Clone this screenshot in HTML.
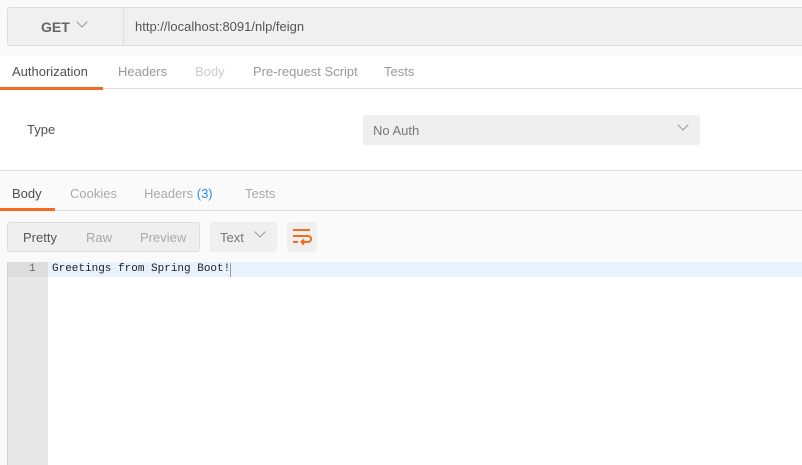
<!DOCTYPE html>
<html><head><style>
*{margin:0;padding:0;box-sizing:border-box}
body{width:802px;height:465px;overflow:hidden;background:#fafafa;font-family:"Liberation Sans",sans-serif;font-size:13px;color:#505050;position:relative}
.a{position:absolute}
.chev{position:absolute;width:8px;height:8px;border-right:1px solid #999;border-bottom:1px solid #999;transform:rotate(45deg)}
</style></head><body>
<div class="a" style="left:0;top:0;width:802px;height:56px;background:#fafafa"></div>
<div class="a" style="left:7px;top:7px;width:800px;height:39px;background:#f0f0f0;border:1px solid #ddd;border-radius:3px"></div>
<div class="a" style="left:123px;top:8px;width:1px;height:37px;background:#ddd"></div>
<div class="a" style="left:41px;top:19px;font-size:14px;color:#666;font-weight:bold">GET</div>
<div class="chev" style="left:78px;top:18px"></div>
<div class="a" style="left:135px;top:19px;color:#555">http://localhost:8091/nlp/feign</div>
<div class="a" style="left:0;top:56px;width:802px;height:114px;background:#fff"></div>
<div class="a" style="left:12px;top:64px;color:#505050">Authorization</div>
<div class="a" style="left:118px;top:64px;color:#999">Headers</div>
<div class="a" style="left:195px;top:64px;color:#ccc">Body</div>
<div class="a" style="left:253px;top:64px;color:#999">Pre-request Script</div>
<div class="a" style="left:384px;top:64px;color:#999">Tests</div>
<div class="a" style="left:0;top:88px;width:802px;height:1px;background:#e0e0e0"></div>
<div class="a" style="left:0;top:87px;width:103px;height:3px;background:#f26b21"></div>
<div class="a" style="left:27px;top:122px;color:#505050">Type</div>
<div class="a" style="left:363px;top:115px;width:337px;height:30px;background:#efefef;border-radius:3px"></div>
<div class="a" style="left:373px;top:123px;color:#777">No Auth</div>
<div class="chev" style="left:679px;top:121px"></div>
<div class="a" style="left:0;top:170px;width:802px;height:1px;background:#ddd"></div>
<div class="a" style="left:12px;top:186px;color:#505050">Body</div>
<div class="a" style="left:70px;top:186px;color:#aaa">Cookies</div>
<div class="a" style="left:144px;top:186px;color:#aaa">Headers <span style="color:#2f8be6">(3)</span></div>
<div class="a" style="left:245px;top:186px;color:#aaa">Tests</div>
<div class="a" style="left:0;top:210px;width:802px;height:1px;background:#ddd"></div>
<div class="a" style="left:0;top:208px;width:55px;height:3px;background:#f26b21"></div>
<div class="a" style="left:7px;top:222px;width:193px;height:30px;background:#efefef;border:1px solid #ddd;border-radius:3px"></div>
<div class="a" style="left:23px;top:230px;color:#555">Pretty</div>
<div class="a" style="left:86px;top:230px;color:#aaa">Raw</div>
<div class="a" style="left:140px;top:230px;color:#aaa">Preview</div>
<div class="a" style="left:210px;top:222px;width:67px;height:30px;background:#efefef;border-radius:3px"></div>
<div class="a" style="left:220px;top:230px;color:#777">Text</div>
<div class="chev" style="left:256px;top:228px"></div>
<div class="a" style="left:287px;top:222px;width:30px;height:30px;background:#efefef;border-radius:3px"></div>
<svg class="a" style="left:292px;top:227px" width="20" height="20" viewBox="0 0 20 20"><path d="M1 3H18M1 9H16a3 3 0 0 1 0 6H10M1 15H6M12 12.5L9.5 15L12 17.5" fill="none" stroke="#f26b21" stroke-width="2"/></svg>
<div class="a" style="left:48px;top:262px;width:754px;height:203px;background:#fff"></div>
<div class="a" style="left:7px;top:262px;width:41px;height:203px;background:#e8e8e8;border-left:1px solid #d4d4d4"></div>
<div class="a" style="left:8px;top:262px;width:40px;height:15px;background:#ddd"></div>
<div class="a" style="left:48px;top:262px;width:754px;height:15px;background:#e8f2fe"></div>
<div class="a" style="left:29px;top:263px;font-family:'Liberation Mono',monospace;font-size:11px;color:#666">1</div>
<div class="a" style="left:52px;top:263px;font-family:'Liberation Mono',monospace;font-size:11px;color:#222">Greetings from Spring Boot!</div>
<div class="a" style="left:230px;top:263px;width:1px;height:14px;background:#999"></div>
</body></html>
